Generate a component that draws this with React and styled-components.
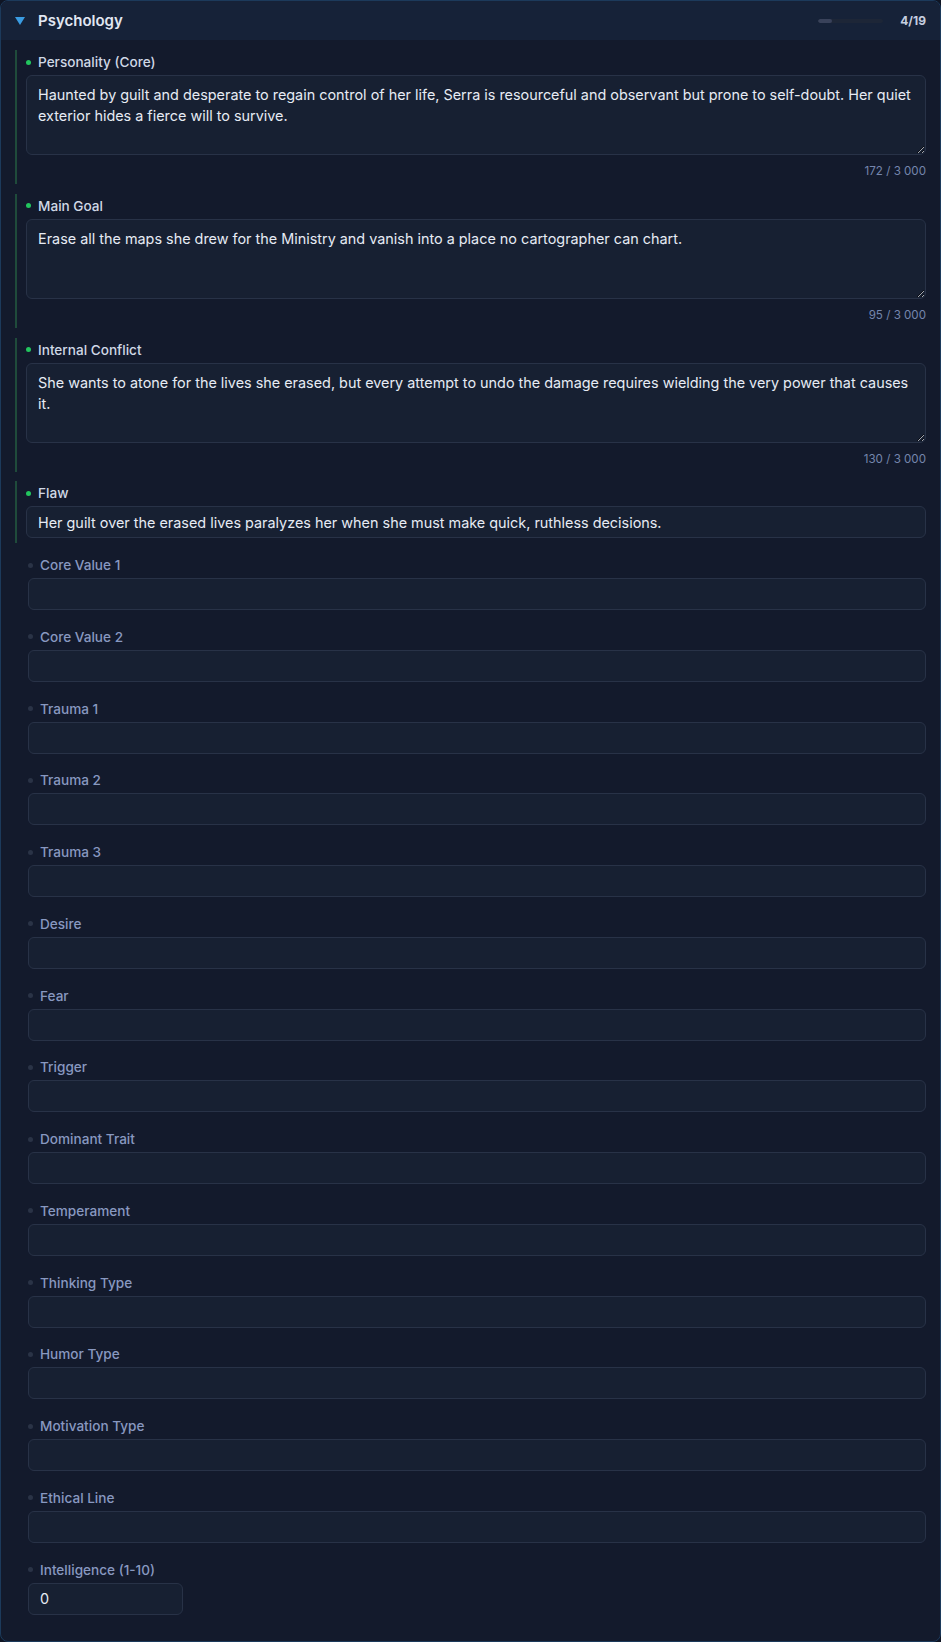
import React from "react";
import styled, { createGlobalStyle } from "styled-components";

const Global = createGlobalStyle`
  html, body { margin: 0; padding: 0; background: #0f1524; color-scheme: dark; }
  * { box-sizing: border-box; }
  body { font-family: Inter, "Noto Sans", "Liberation Sans", sans-serif; }
`;

const Card = styled.section`
  width: 941px;
  border: 1px solid #1c3a5b;
  border-radius: 8px;
  overflow: hidden;
  background: #131a2c;
`;

const Header = styled.header`
  height: 39px;
  display: flex;
  align-items: center;
  padding: 0 14px;
  background: #162238;
`;

const Caret = styled.svg`
  width: 10px;
  height: 8px;
  flex: none;
  margin-top: 1px;
`;

const Title = styled.h2`
  margin: 0 0 0 13px;
  font-size: 15px;
  font-weight: 600;
  color: #e1e7f2;
  flex: 1;
`;

const Track = styled.div`
  width: 65px;
  height: 4px;
  border-radius: 2px;
  background: #1d2637;
  margin-right: 17px;
  overflow: hidden;
`;

const Fill = styled.div`
  height: 100%;
  border-radius: 2px;
  background: #39425a;
`;

const Progress = styled.span`
  font-size: 12px;
  font-weight: 700;
  color: #c6cfe0;
`;

const Body = styled.div`
  padding: 10px 14px 21px 14px;
  display: flex;
  flex-direction: column;
  gap: 9.75px;
`;

const Field = styled.div`
  border-left: 2px solid ${(p) => (p.$filled ? "#1f4b3b" : "transparent")};
  padding: 3px 0 5px ${(p) => (p.$filled ? "9px" : "11px")};
`;

const Label = styled.label`
  display: flex;
  align-items: center;
  gap: 7px;
  height: 18px;
  margin-bottom: 4px;
  font-size: 13.6px;
  font-weight: 500;
  color: ${(p) => (p.$filled ? "#d0d8e6" : "#8898c0")};
`;

const Dot = styled.span`
  width: 5px;
  height: 5px;
  border-radius: 50%;
  flex: none;
  background: ${(p) => (p.$filled ? "#22c55e" : "#2a3346")};
`;

const TextArea = styled.textarea`
  display: block;
  width: 100%;
  height: 80px;
  padding: 8px 11px;
  border: 1px solid #283247;
  border-radius: 6px;
  background: #172032;
  color: #e6ebf4;
  font: 400 14.4px/21px Inter, "Noto Sans", sans-serif;
  resize: vertical;
  outline: none;
`;

const Input = styled.input`
  display: block;
  width: ${(p) => (p.$narrow ? "155px" : "100%")};
  height: 32px;
  padding: 0 11px;
  border: 1px solid #283247;
  border-radius: 6px;
  background: #172032;
  color: #e6ebf4;
  font: 400 14.4px Inter, "Noto Sans", sans-serif;
  outline: none;
`;

const Count = styled.div`
  margin-top: 8px;
  text-align: right;
  font-size: 11.6px;
  line-height: 16px;
  color: #7586ac;
`;

const fields = [
  {
    label: "Personality (Core)",
    type: "area",
    value:
      "Haunted by guilt and desperate to regain control of her life, Serra is resourceful and observant but prone to self-doubt. Her quiet exterior hides a fierce will to survive.",
  },
  {
    label: "Main Goal",
    type: "area",
    value:
      "Erase all the maps she drew for the Ministry and vanish into a place no cartographer can chart.",
  },
  {
    label: "Internal Conflict",
    type: "area",
    value:
      "She wants to atone for the lives she erased, but every attempt to undo the damage requires wielding the very power that causes it.",
  },
  {
    label: "Flaw",
    type: "input",
    value:
      "Her guilt over the erased lives paralyzes her when she must make quick, ruthless decisions.",
  },
  ...[
    "Core Value 1",
    "Core Value 2",
    "Trauma 1",
    "Trauma 2",
    "Trauma 3",
    "Desire",
    "Fear",
    "Trigger",
    "Dominant Trait",
    "Temperament",
    "Thinking Type",
    "Humor Type",
    "Motivation Type",
    "Ethical Line",
  ].map((label) => ({ label, type: "input", value: "" })),
  { label: "Intelligence (1-10)", type: "number", value: "0" },
];

const fmt = (n) => String(n).replace(/\B(?=(\d{3})+(?!\d))/g, " ");

export default function App() {
  const filledCount = fields.filter((f) => f.type !== "number" && f.value).length;
  const total = 19;
  return (
    <>
      <Global />
      <Card>
        <Header>
          <Caret viewBox="0 0 10 8">
            <path d="M0 0 H10 L5 8 Z" fill="#3a9ce2" />
          </Caret>
          <Title>Psychology</Title>
          <Track>
            <Fill style={{ width: `${(filledCount / total) * 100}%` }} />
          </Track>
          <Progress>
            {filledCount}/{total}
          </Progress>
        </Header>
        <Body>
          {fields.map((f) => {
            const filled = f.type !== "number" && !!f.value;
            return (
              <Field key={f.label} $filled={filled}>
                <Label $filled={filled}>
                  <Dot $filled={filled} />
                  {f.label}
                </Label>
                {f.type === "area" ? (
                  <>
                    <TextArea defaultValue={f.value} />
                    <Count>
                      {f.value.length} / {fmt(3000)}
                    </Count>
                  </>
                ) : f.type === "number" ? (
                  <Input $narrow type="text" defaultValue={f.value} />
                ) : (
                  <Input type="text" defaultValue={f.value} />
                )}
              </Field>
            );
          })}
        </Body>
      </Card>
    </>
  );
}
